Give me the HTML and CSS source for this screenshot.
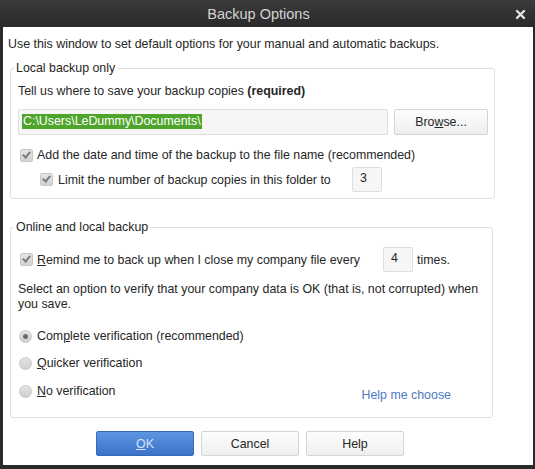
FILE: index.html
```html
<!DOCTYPE html>
<html lang="en">
<head>
    <meta charset="UTF-8">
    <title>Backup Options</title>
    <link rel="stylesheet" href="styles.css">
</head>
<body>
<div class="window">
    <div class="titlebar">
        <span></span>
        <span class="title">Backup Options</span>
        <span class="close">
            <svg width="11" height="11" viewBox="0 0 11 11">
                <path d="M2 2 L9 9 M9 2 L2 9" stroke="#e2e2e2" stroke-width="2.4" stroke-linecap="round"/>
            </svg>
        </span>
    </div>
    <div class="content">
        <p class="intro">Use this window to set default options for your manual and automatic backups.</p>

        <fieldset class="group localGroup">
            <legend>Local backup only</legend>
            <div class="groupBody">
                <div class="tellText">Tell us where to save your backup copies <b>(required)</b></div>
                <div class="pathRow">
                    <div class="pathBox"><span class="selected">C:\Users\LeDummy\Documents\</span></div>
                    <button class="btn browseButton">Bro<u>w</u>se...</button>
                </div>
                <div class="check dateCheck"><span class="box"></span>Add the date and time of the backup to the file name (recommended)</div>
                <div class="check limitCheck">
                    <span class="box"></span>
                    <span class="limitText">Limit the number of backup copies in this folder to</span>
                    <span class="numBox">3</span>
                </div>
            </div>
        </fieldset>

        <fieldset class="group onlineGroup">
            <legend>Online and local backup</legend>
            <div class="groupBody">
                <div class="check remindCheck">
                    <span class="box"></span>
                    <span class="remindText"><u>R</u>emind me to back up when I close my company file every</span>
                    <span class="numBox">4</span>
                    <span class="timesText">times.</span>
                </div>
                <p class="verifyText">Select an option to verify that your company data is OK (that is, not corrupted) when<br>you save.</p>
                <div class="radio firstRadio"><span class="dot checked"></span>Com<u>p</u>lete verification (recommended)</div>
                <div class="radio"><span class="dot"></span><u>Q</u>uicker verification</div>
                <div class="lastRow">
                    <div class="radio lastRadio"><span class="dot"></span><u>N</u>o verification</div>
                    <a class="helpLink" href="#">Help me choose</a>
                </div>
            </div>
        </fieldset>

        <div class="buttonRow">
            <button class="btn okButton"><u>O</u>K</button>
            <button class="btn">Cancel</button>
            <button class="btn">Help</button>
        </div>
    </div>
</div>
</body>
</html>
```

FILE: styles.css
```css
body {
    margin: 0;
    padding: 0;
    background-color: #2b2b2b;
    font-family: "Liberation Sans", Arial, sans-serif;
    font-size: 12.4px;
    color: #262626;
}
.window {
    width: 535px;
    height: 469px;
    display: flex;
    flex-direction: column;
    background: linear-gradient(#3a3a3a, #2a2a2a 27px, #2b2b2b);
}
.titlebar {
    height: 27px;
    display: grid;
    grid-template-columns: 1fr auto 1fr;
    align-items: center;
}
.title {
    color: #d4d4d4;
    font-size: 14.5px;
    padding-right: 18px;
}
.close {
    justify-self: end;
    padding-right: 9px;
    display: flex;
    padding-top: 1px;
}
.content {
    margin: 0 2px 4px 3px;
    height: 438px;
    background-color: #FFF;
    padding: 10px 0 0 0;
    box-sizing: border-box;
}
.intro {
    margin: 0 0 0 5px;
    line-height: 14px;
}
.group {
    margin: 10px 0 0 7px;
    width: 483px;
    box-sizing: border-box;
    border: 1px solid #e0e0e0;
    border-radius: 3px;
    padding: 0;
}
.group legend {
    margin-left: 3px;
    padding: 0 3px 0 2px;
    line-height: 14px;
}
.groupBody {
    padding: 0 6px 0 7px;
}
.tellText {
    margin-top: 9px;
    line-height: 14px;
}
.pathRow {
    display: flex;
    margin-top: 11px;
}
.pathBox {
    width: 370px;
    height: 26px;
    box-sizing: border-box;
    background-color: #f6f6f6;
    border: 1px solid #dedede;
    border-radius: 2px;
    padding: 4px 0 0 3px;
}
.selected {
    background-color: #4fa42b;
    color: #FFF;
    line-height: 15px;
    display: inline-block;
    padding: 0 1px;
}
.btn {
    font-family: "Liberation Sans", Arial, sans-serif;
    font-size: 12.4px;
    color: #262626;
    height: 25px;
    border: 1px solid #d4d4d4;
    border-radius: 2px;
    background: linear-gradient(#fdfdfd, #efefef);
    padding: 0;
}
.browseButton {
    width: 94px;
    height: 26px;
    margin-left: 6px;
}
.check, .radio {
    display: flex;
    align-items: center;
    line-height: 14px;
}
.box {
    width: 11px;
    height: 11px;
    border: 1px solid #c8c8c8;
    border-radius: 2px;
    background: linear-gradient(#e4e4e4, #d4d4d4);
    margin-right: 4px;
    position: relative;
}
.box::after {
    content: "";
    position: absolute;
    left: 3px;
    top: 0px;
    width: 3px;
    height: 6px;
    border: solid #7a7a7a;
    border-width: 0 2px 2px 0;
    transform: rotate(40deg);
}
.dateCheck {
    margin: 13px 0 0 2px;
}
.limitCheck {
    margin: 5px 0 0 22px;
}
.limitText {
    width: 294px;
    padding-left: 1px;
}
.numBox {
    width: 30px;
    height: 25px;
    box-sizing: border-box;
    background-color: #f6f6f6;
    border: 1px solid #dedede;
    border-radius: 2px;
    padding: 3px 0 0 7px;
    line-height: 14px;
    align-self: flex-start;
}
.localGroup {
    padding-bottom: 6px;
}
.onlineGroup {
    margin-top: 21px;
    padding-bottom: 15px;
}
.remindCheck {
    margin: 13px 0 0 2px;
}
.remindText {
    width: 346px;
}
.timesText {
    margin-left: 4px;
}
.verifyText {
    margin: 10px 0 0 0;
    line-height: 15px;
    white-space: nowrap;
}
.dot {
    width: 11px;
    height: 11px;
    border: 1px solid #c8c8c8;
    border-radius: 50%;
    background: linear-gradient(#e4e4e4, #cfcfcf);
    margin-right: 5px;
    position: relative;
}
.dot.checked::after {
    content: "";
    position: absolute;
    left: 3px;
    top: 3px;
    width: 5px;
    height: 5px;
    border-radius: 50%;
    background-color: #6a6a6a;
}
.radio {
    margin: 13px 0 0 1px;
}
.firstRadio {
    margin-top: 17px;
}
.radio.lastRadio {
    margin-top: 10px;
}
.lastRow {
    display: flex;
    justify-content: space-between;
    padding-right: 35px;
}
.helpLink {
    margin-top: 18px;
    color: #4f79c2;
    text-decoration: none;
    line-height: 14px;
}
.buttonRow {
    display: flex;
    gap: 7px;
    padding-left: 93px;
    margin-top: 13px;
}
.buttonRow .btn {
    width: 98px;
}
.buttonRow .okButton {
    background: linear-gradient(#5e95e2, #3c72c9);
    border-color: #3a68b8;
    color: #d6e4fa;
}
```
